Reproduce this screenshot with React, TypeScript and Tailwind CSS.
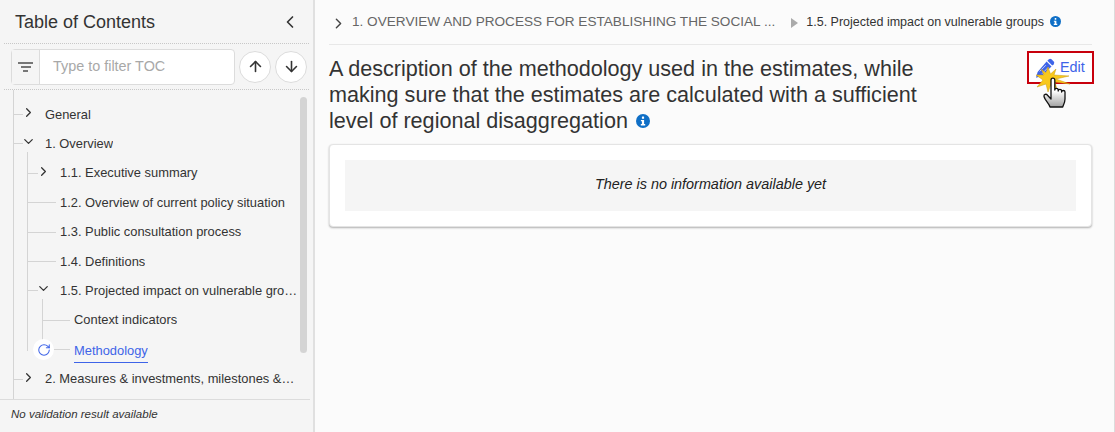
import { ArrowDown, ArrowUp, ChevronDown, ChevronLeft, ChevronRight, RotateCw } from 'lucide-react';

function InfoIcon({ className }: { className: string }) {
  return (
    <svg viewBox="0 0 14 14" className={className}>
      <circle cx="7" cy="7" r="7" fill="#0f6fc6" />
      <rect x="5.9" y="2.6" width="2.2" height="2.1" rx="0.5" fill="#fff" />
      <path d="M4.9 6h3.2v4h1.1v1.4H4.8V10h1.1V7.3h-1z" fill="#fff" />
    </svg>
  );
}

function TreeRow({ label, open, leaf, active, width }: { label: string; open?: boolean; leaf?: boolean; active?: boolean; width?: string }) {
  return (
    <div className="relative flex h-[29.4px] items-center">
      <div className={`absolute left-0 top-[14px] h-px bg-[#d4d4d4] ${leaf ? 'w-7' : 'w-[10px]'}`} />
      {!leaf && (
        <div className="absolute left-[8px] top-[5px] text-[#333]">
          {open ? <ChevronDown size={15} strokeWidth={2} /> : <ChevronRight size={15} strokeWidth={2} />}
        </div>
      )}
      {active && (
        <div className="absolute -left-[9px] top-[4px] flex h-[21px] w-[21px] items-center justify-center rounded-full bg-white">
          <RotateCw size={14} strokeWidth={1.75} className="text-[#3e64e8]" />
        </div>
      )}
      <span
        className={`ml-[32px] truncate text-[12.9px] leading-5 ${width ?? ''} ${active ? 'mt-[4px] border-b border-[#3e64e8] pb-[1px] text-[#3e64e8]' : 'text-[#333]'}`}
      >
        {label}
      </span>
    </div>
  );
}

function Hand() {
  return (
    <svg viewBox="0 0 50 50" className="absolute left-[12px] top-[15px] h-[50px] w-[50px] overflow-visible">
      <polygon
        points="9,1 11.500,8 17,3 15,9 30,10 17,13 31,18 16,16 18,24 12,18 9,26 7,18 -2,21 4,14 -3,9 5,9 2,3 7,7"
        fill="#f8c81c"
        stroke="#c99a12"
        strokeWidth="0.5"
      />
      <path
        d="M12 14c0-2.600 3.800-2.600 3.800 0v10c0-2.200 3.400-2.200 3.400 0v1c0-2.200 3.400-2.200 3.400 0v1c0-2 3.400-2 3.400 0v7c0 4-1.800 6-2.300 8H11c-1-3.500-5-6.500-6-10.500-.5-2.200 2.200-3 3.500-1.300l3.500 3.800z"
        fill="url(#handFill)"
        stroke="#111"
        strokeWidth="1.300"
        strokeLinejoin="round"
      />
      <defs>
        <linearGradient id="handFill" x1="0" y1="0" x2="0" y2="1">
          <stop offset="0.45" stopColor="#ffffff" />
          <stop offset="1" stopColor="#a0a0a0" />
        </linearGradient>
      </defs>
    </svg>
  );
}

function Pencil() {
  return (
    <svg viewBox="0 0 20 20" className="h-5 w-5">
      <path d="M13.800 1.300a2 2 0 0 1 2.700 0l2.200 2.200a2 2 0 0 1 0 2.700l-1.400 1.400-4.900-4.900z" fill="#3e64e8" />
      <path d="M11.600 3.500l4.900 4.900-9.700 9.700-5.800 1.600 1.600-5.800z" fill="#3e64e8" />
      <path d="M4.700 13.400l6.200-6.200M7 15.700l6.200-6.200" stroke="#c9d4fb" strokeWidth="0.900" />
    </svg>
  );
}

export default function App() {
  return (
    <div className="flex h-[432px] w-[1115px] overflow-hidden bg-[#fbfbfb] font-['Liberation_Sans',sans-serif] text-[#333]">
      <aside className="flex w-[315px] shrink-0 flex-col border-r-2 border-[#e0e0e0] bg-[#f5f5f5]">
        <div className="mx-1 flex h-[44px] items-center justify-between border-b border-dotted border-[#c8c8c8] pl-[11px] pr-[9px]">
          <h2 className="text-[18px] leading-6">Table of Contents</h2>
          <ChevronLeft size={20} strokeWidth={2} />
        </div>
        <div className="mx-1 flex h-[46px] items-center gap-1 border-b border-dotted border-[#c8c8c8] pl-[7px]">
          <div className="flex h-[36px] w-[224px] rounded border border-[#dcdcdc] bg-white">
            <div className="flex w-[28px] flex-col items-center justify-center gap-[2px] border-r border-[#dcdcdc] bg-[#f5f5f5]">
              <span className="h-[2px] w-[15px] bg-[#777]" />
              <span className="h-[2px] w-[10px] bg-[#777]" />
              <span className="h-[2px] w-[5px] bg-[#777]" />
            </div>
            <span className="pl-[13px] text-[14.4px] leading-[32px] text-[#a8a8a8]">Type to filter TOC</span>
          </div>
          <button className="flex h-[32px] w-[32px] items-center justify-center rounded-full border border-[#dcdcdc] bg-white">
            <ArrowUp size={17} strokeWidth={2.25} />
          </button>
          <button className="flex h-[32px] w-[32px] items-center justify-center rounded-full border border-[#dcdcdc] bg-white">
            <ArrowDown size={17} strokeWidth={2.25} />
          </button>
        </div>
        <div className="relative min-h-0 flex-1 overflow-hidden">
          <div className="absolute right-[6px] top-[7px] h-[256px] w-[7px] rounded bg-[#d4d4d4]" />
          <div className="ml-[13px] mr-[15px] mt-[10px]">
            <div className="absolute bottom-0 left-[13px] top-0 w-px bg-[#d4d4d4]" />
            <TreeRow label="General" />
            <TreeRow label="1. Overview" open />
            <div className="relative ml-[15px]">
              <div className="absolute -left-px -top-[7px] bottom-[14px] w-px bg-[#d4d4d4]" />
              <TreeRow label="1.1. Executive summary" />
              <TreeRow label="1.2. Overview of current policy situation" leaf />
              <TreeRow label="1.3. Public consultation process" leaf />
              <TreeRow label="1.4. Definitions" leaf />
              <TreeRow label="1.5. Projected impact on vulnerable groups" open width="w-[238px]" />
              <div className="relative ml-[14px]">
                <div className="absolute left-0 -top-[7px] bottom-[22px] w-px bg-[#d4d4d4]" />
                <TreeRow label="Context indicators" leaf />
                <TreeRow label="Methodology" leaf active />
              </div>
            </div>
            <TreeRow label="2. Measures &amp; investments, milestones &amp; targets" width="w-[251px]" />
          </div>
        </div>
        <div className="mr-[3px] flex h-[33px] items-start border-t border-[#dcdcdc] pl-[11px] pt-[6px]">
          <span className="text-[11.52px] italic leading-4">No validation result available</span>
        </div>
      </aside>
      <main className="min-w-0 flex-1 border-r border-[#dcdcdc] pl-[14px] pr-[22px]">
        <nav className="flex h-[45px] items-center border-b border-[#e8e8e8] pr-1 pt-[1px]">
          <ChevronRight size={17} strokeWidth={2} className="ml-[1px] mt-[2px] text-[#444]" />
          <span className="ml-[5px] text-[13.6px] text-[#666]">1. OVERVIEW AND PROCESS FOR ESTABLISHING THE SOCIAL ...</span>
          <span className="ml-[16px] h-0 w-0 border-y-[5px] border-l-[7px] border-y-transparent border-l-[#aaa]" />
          <span className="ml-[8px] text-[12.5px] text-[#333]">1.5. Projected impact on vulnerable groups</span>
          <InfoIcon className="mb-[3px] ml-[6px] h-[11px] w-[11px]" />
        </nav>
        <div className="flex items-start justify-between">
          <h1 className="mt-[11px] w-[600px] text-[21.6px] leading-[26px] text-[#333]">
            A description of the methodology used in the estimates, while making sure that the estimates are calculated with a sufficient level of regional disaggregation <InfoIcon className="mb-[3px] ml-[2px] inline h-[14px] w-[14px]" />
          </h1>
          <div className="relative -mr-[2px] mt-[6px]">
            <button className="flex h-[33px] w-[67px] items-center gap-[5px] border-2 border-[#c8000c] bg-white pl-[6px] text-[14.4px] text-[#3e64e8]">
              <Pencil />
              Edit
            </button>
            <Hand />
          </div>
        </div>
        <section className="mt-[10px] rounded border border-[#e4e4e4] bg-white p-[15px] shadow-[0_1px_2px_rgba(0,0,0,0.3)]">
          <div className="flex h-[51px] items-center justify-center bg-[#f5f5f5] pb-[2px] text-[14.4px] italic text-[#222]">
            There is no information available yet
          </div>
        </section>
      </main>
    </div>
  );
}
